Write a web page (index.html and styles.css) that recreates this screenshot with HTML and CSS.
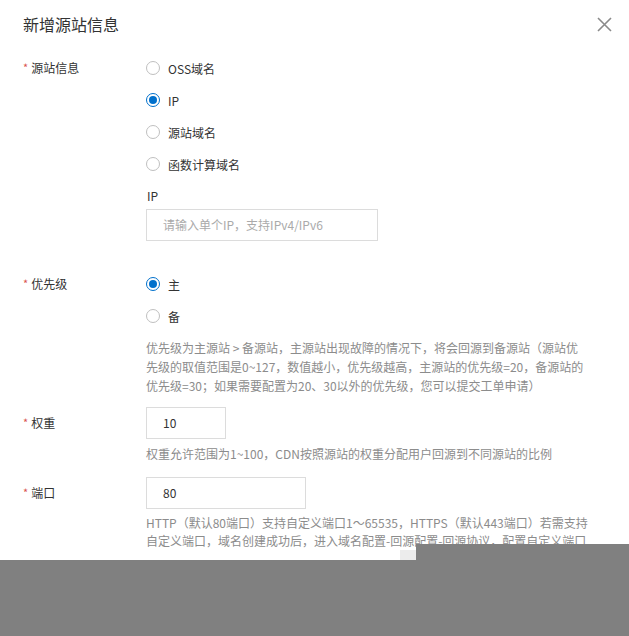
FILE: index.html
```html
<!DOCTYPE html>
<html lang="zh-CN">
<head>
<meta charset="utf-8">
<title>新增源站信息</title>
<link rel="stylesheet" href="styles.css">
</head>
<body>
<div class="dialog">
  <div class="header">
    <h1 class="title">新增源站信息</h1>
    <span class="close" aria-label="关闭">
      <svg width="15" height="15" viewBox="0 0 15 15"><path d="M1 1 L14 14 M14 1 L1 14" stroke="#8a8a8a" stroke-width="1.6" fill="none"/></svg>
    </span>
  </div>

  <div class="form">
    <div class="row row-origin">
      <div class="label"><span class="req">*</span>源站信息</div>
      <div class="control">
        <div class="radios">
          <div class="radio"><span class="dot"></span><span>OSS域名</span></div>
          <div class="radio checked"><span class="dot"></span><span>IP</span></div>
          <div class="radio"><span class="dot"></span><span>源站域名</span></div>
          <div class="radio"><span class="dot"></span><span>函数计算域名</span></div>
        </div>
        <div class="sublabel">IP</div>
        <div class="input input-ip placeholder">请输入单个IP，支持IPv4/IPv6</div>
      </div>
    </div>

    <div class="row row-priority">
      <div class="label"><span class="req">*</span>优先级</div>
      <div class="control">
        <div class="radios">
          <div class="radio checked"><span class="dot"></span><span>主</span></div>
          <div class="radio"><span class="dot"></span><span>备</span></div>
        </div>
        <p class="help help-priority">优先级为主源站 &gt; 备源站，主源站出现故障的情况下，将会回源到备源站（源站优<br>先级的取值范围是0~127，数值越小，优先级越高，主源站的优先级=20，备源站的<br>优先级=30；如果需要配置为20、30以外的优先级，您可以提交工单申请）</p>
      </div>
    </div>

    <div class="row row-weight">
      <div class="label label-input"><span class="req">*</span>权重</div>
      <div class="control">
        <div class="input input-weight">10</div>
        <p class="help help-weight">权重允许范围为1~100，CDN按照源站的权重分配用户回源到不同源站的比例</p>
      </div>
    </div>

    <div class="row row-port">
      <div class="label label-input"><span class="req">*</span>端口</div>
      <div class="control">
        <div class="input input-port">80</div>
        <p class="help help-port">HTTP（默认80端口）支持自定义端口1～65535，HTTPS（默认443端口）若需支持<br>自定义端口，域名创建成功后，进入域名配置-回源配置-回源协议，配置自定义端口</p>
      </div>
    </div>
  </div>
</div>

<div class="mask mask-bottom"></div>
<div class="mask mask-right"></div>
<div class="mask-patch"></div>
</body>
</html>
```

FILE: styles.css
```css
html, body {
  margin: 0;
  padding: 0;
  background: #ffffff;
}

body {
  width: 629px;
  height: 636px;
  overflow: hidden;
  position: relative;
  font-family: "Noto Sans CJK SC", "Microsoft YaHei", sans-serif;
  font-size: 12px;
  color: #333333;
}

.dialog {
  padding: 0 23px;
}

.header {
  position: relative;
  height: 36px;
  padding-top: 12px;
  box-sizing: border-box;
}

.title {
  margin: 0;
  font-size: 16px;
  line-height: 24px;
  font-weight: normal;
  color: #333333;
}

.close {
  position: absolute;
  right: -6px;
  top: 17px;
  width: 15px;
  height: 15px;
  display: block;
}

.close svg {
  display: block;
}

.form {
  margin-top: 16px;
}

.row {
  display: flex;
}

.label {
  width: 123px;
  flex: none;
  line-height: 32px;
  color: #333333;
}

.req {
  color: #d9534f;
  margin-right: 3px;
  font-size: 11px;
  position: relative;
  top: -1px;
}

.control {
  flex: 1;
}

.radios {
  display: flex;
  flex-direction: column;
}

.radio {
  display: flex;
  align-items: center;
  height: 32px;
  color: #333333;
}

.dot {
  width: 14px;
  height: 14px;
  box-sizing: border-box;
  border: 1px solid #bfbfbf;
  border-radius: 50%;
  margin-right: 8px;
  position: relative;
  background: #fff;
}

.radio.checked .dot {
  border-color: #0070cc;
}

.radio.checked .dot::after {
  content: "";
  position: absolute;
  left: 2px;
  top: 2px;
  width: 8px;
  height: 8px;
  border-radius: 50%;
  background: #0070cc;
}

.sublabel {
  margin-top: 6px;
  line-height: 20px;
  color: #333333;
  padding-left: 1px;
}

.input {
  box-sizing: border-box;
  height: 32px;
  border: 1px solid #dcdcdc;
  padding-left: 16px;
  line-height: 30px;
  color: #333333;
}

.input.placeholder {
  color: #aaaaaa;
}

.input-ip {
  margin-top: 3px;
  width: 232px;
}

.input-weight {
  width: 80px;
}

.input-port {
  width: 160px;
}

.help {
  margin: 0;
  color: #8c8c8c;
  white-space: nowrap;
}

.row-priority {
  margin-top: 27px;
}

.help-priority {
  margin-top: 6px;
  line-height: 19px;
}

.row-weight {
  margin-top: 12px;
}

.help-weight {
  margin-top: 5px;
  line-height: 19px;
}

.row-port {
  margin-top: 14px;
}

.help-port {
  margin-top: 5px;
  line-height: 18px;
}

.mask {
  position: absolute;
  background: #808080;
}

.mask-bottom {
  left: 0;
  right: 0;
  top: 560px;
  bottom: 0;
}

.mask-right {
  left: 416px;
  right: 0;
  top: 544px;
  height: 16px;
}

.mask-patch {
  position: absolute;
  left: 400px;
  top: 550px;
  width: 16px;
  height: 10px;
  background: #ececec;
}
```
